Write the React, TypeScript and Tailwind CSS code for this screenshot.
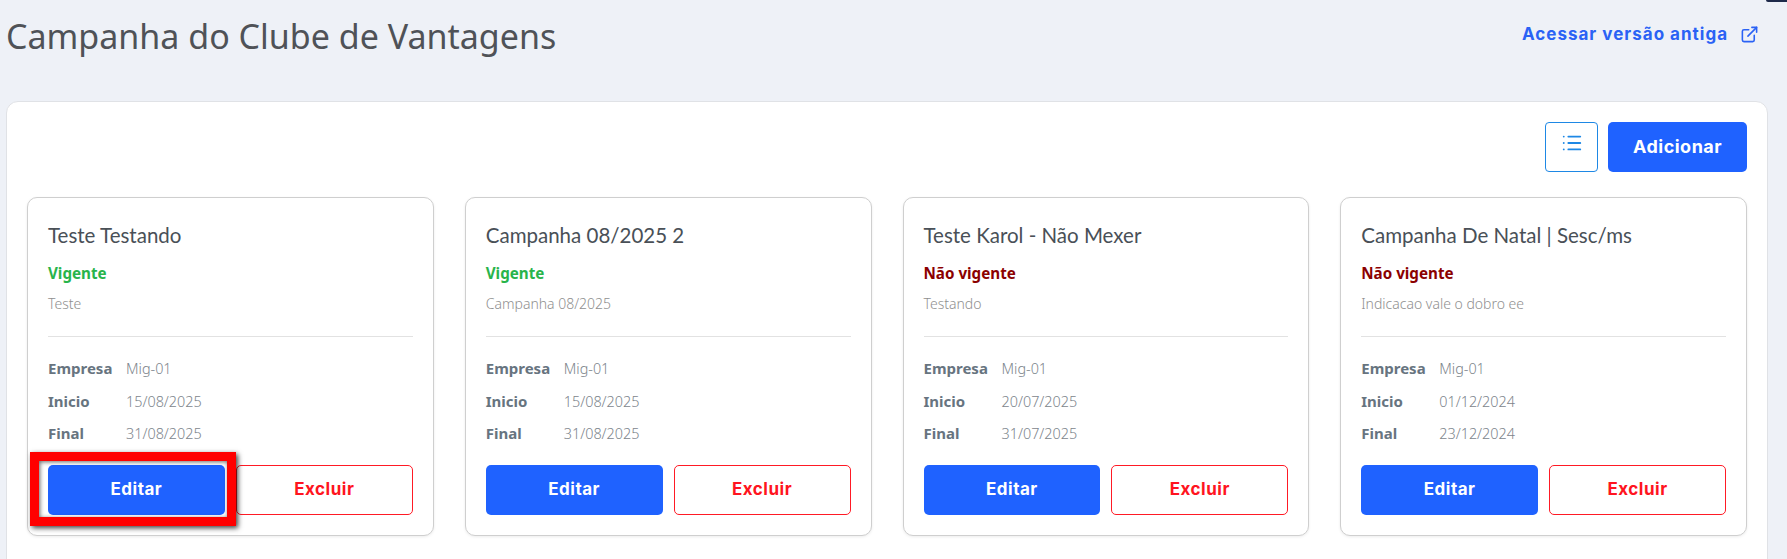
import { ExternalLink, List } from 'lucide-react';

const campaigns = [
  { id: 1, title: 'Teste Testando', active: true, description: 'Teste', start: '15/08/2025', end: '31/08/2025' },
  { id: 2, title: 'Campanha 08/2025 2', active: true, description: 'Campanha 08/2025', start: '15/08/2025', end: '31/08/2025' },
  { id: 3, title: 'Teste Karol - Não Mexer', active: false, description: 'Testando', start: '20/07/2025', end: '31/07/2025' },
  { id: 4, title: 'Campanha De Natal | Sesc/ms', active: false, description: 'Indicacao vale o dobro ee', start: '01/12/2024', end: '23/12/2024' },
];

function InfoRow({ label, value }: { label: string; value: string }) {
  return (
    <div className="flex h-[32.5px] items-baseline pt-[4px]">
      <span className="w-[78px] text-[15px] font-bold text-[#67747f]">{label}</span>
      <span className="text-[14.4px] font-light text-[#7d858c]">{value}</span>
    </div>
  );
}

function CampaignCard({ campaign, highlighted }: { campaign: (typeof campaigns)[number]; highlighted: boolean }) {
  return (
    <div className="flex h-[339px] flex-col rounded-[10px] border border-[#cfcfcf] bg-white px-5 pt-[24px] shadow-[0_1px_3px_rgba(0,0,0,0.08)]">
      <h2 className="font-['Lato',sans-serif] text-[20.5px] leading-[26px] text-[#495057]">{campaign.title}</h2>
      <p className={`mt-[15px] text-[15.2px] leading-5 font-bold ${campaign.active ? 'text-[#28b44b]' : 'text-[#8b0000]'}`}>
        {campaign.active ? 'Vigente' : 'Não vigente'}
      </p>
      <p className="mt-[11px] text-[14px] leading-5 font-light text-[#8f8f8f]">{campaign.description}</p>
      <hr className="mt-[22px] border-[#e2e2e2]" />
      <div className="mt-[16px]">
        <InfoRow label="Empresa" value="Mig-01" />
        <InfoRow label="Inicio" value={campaign.start} />
        <InfoRow label="Final" value={campaign.end} />
      </div>
      <div className="mt-[14px] grid grid-cols-2 gap-[11px]">
        <div className="relative">
          <button className="h-[50px] w-full rounded-[5px] bg-[#1f62ff] font-['Inter',sans-serif] text-[17px] font-bold tracking-[0.5px] text-white">
            Editar
          </button>
          {highlighted && (
            <div className="absolute top-[-13px] right-[-11px] bottom-[-11px] left-[-18px] border-[9px] border-[#ff0000] shadow-[2px_2px_5px_rgba(0,0,0,0.75),inset_1px_1px_4px_rgba(0,0,0,0.6)]" />
          )}
        </div>
        <button className="h-[50px] rounded-[5px] border border-[#ff1a25] bg-white font-['Inter',sans-serif] text-[17px] font-bold tracking-[0.5px] text-[#ff1420]">
          Excluir
        </button>
      </div>
    </div>
  );
}

export default function App() {
  return (
    <div className="relative h-[559px] overflow-hidden bg-[#eef1f7] pr-[19px] pl-[6px] font-['Noto_Sans',sans-serif]">
      <div className="absolute top-0 right-0 h-[2px] w-[21px] rounded-bl-[4px] bg-[#1e2a4a]" />
      <header className="flex h-[101px] items-start justify-between pt-[13px]">
        <h1 className="text-[34px] leading-[46px] text-[#4f5257]">Campanha do Clube de Vantagens</h1>
        <a className="mt-[9px] mr-[9px] flex items-center gap-[12px] font-['Inter',sans-serif] text-[17px] leading-6 font-bold tracking-[1px] text-[#2a62f5]">
          Acessar versão antiga
          <ExternalLink size={19} strokeWidth={2} />
        </a>
      </header>
      <main className="h-[470px] rounded-t-[12px] border border-[#e0e2e6] bg-white px-5 pt-5">
        <div className="flex justify-end gap-[10px]">
          <button className="flex h-[50px] w-[53px] items-center justify-center rounded-[4px] border border-[#1e88e5] pb-[8px] text-[#1e88e5]">
            <List size={22} strokeWidth={2} />
          </button>
          <button className="h-[50px] w-[139px] rounded-[5px] bg-[#1f62ff] pb-[2px] font-['Inter',sans-serif] text-[18px] font-bold tracking-[0.5px] text-white">
            Adicionar
          </button>
        </div>
        <div className="mt-[25px] grid grid-cols-4 gap-[31px]">
          {campaigns.map((campaign) => (
            <CampaignCard key={campaign.id} campaign={campaign} highlighted={campaign.id === 1} />
          ))}
        </div>
      </main>
    </div>
  );
}
